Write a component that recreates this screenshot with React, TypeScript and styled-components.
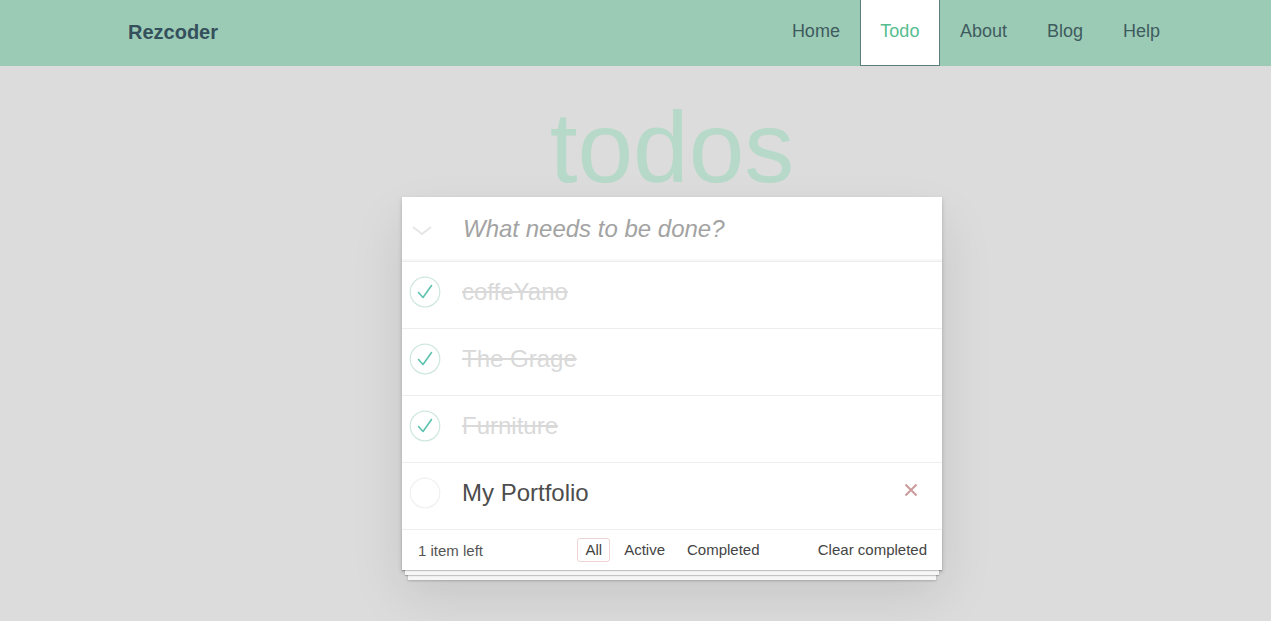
import React from "react";
import styled, { createGlobalStyle } from "styled-components";

const Global = createGlobalStyle`
  html, body { margin: 0; padding: 0; }
  body {
    background: #dcdcdc;
    font-family: "Liberation Sans", Arial, Helvetica, sans-serif;
    font-size: 14px;
    color: #4d4d4d;
    min-height: 621px;
  }
  * { box-sizing: border-box; }
`;

const NavBar = styled.header`
  height: 66px;
  background: #9ccbb5;
  display: flex;
  align-items: stretch;
  justify-content: space-between;
  padding: 0 91px 0 128px;
`;

const Brand = styled.div`
  display: flex;
  align-items: center;
  font-size: 20px;
  font-weight: 700;
  color: #34505c;
  padding-bottom: 2px;
`;

const NavList = styled.nav`
  display: flex;
  align-items: stretch;
`;

const NavLink = styled.a<{ $active?: boolean }>`
  display: flex;
  align-items: center;
  justify-content: center;
  padding: 0 19px 2px;
  min-width: ${(p) => (p.$active ? "80px" : "0")};
  font-size: 18px;
  text-decoration: none;
  color: ${(p) => (p.$active ? "#56bd8f" : "#3e5b5f")};
  background: ${(p) => (p.$active ? "#ffffff" : "transparent")};
  border: 1px solid ${(p) => (p.$active ? "#5b7d7e" : "transparent")};
  border-top: none;
`;

const Main = styled.main`
  display: flex;
  flex-direction: column;
  align-items: center;
  padding: 31px 0 40px 73px;
`;

const Title = styled.h1`
  margin: 0;
  height: 100px;
  font-size: 100px;
  line-height: 100px;
  font-weight: 400;
  color: #b6d9c9;
  text-align: center;
`;

const Card = styled.section`
  width: 540px;
  background: #fff;
  position: relative;
  box-shadow: 0 2px 4px 0 rgba(0, 0, 0, 0.2), 0 25px 50px 0 rgba(0, 0, 0, 0.1);
`;

const Header = styled.div`
  height: 65px;
  display: flex;
  align-items: center;
  border-bottom: 1px solid #ededed;
  box-shadow: inset 0 -2px 1px rgba(0, 0, 0, 0.03);
`;

const ToggleAll = styled.div`
  width: 60px;
  display: flex;
  align-items: center;
  padding-left: 9px;
  padding-top: 4px;
`;

const NewTodo = styled.input`
  flex: 1;
  border: none;
  outline: none;
  background: transparent;
  font-family: inherit;
  font-size: 24px;
  color: #4d4d4d;
  padding: 0 0 0 1px;
  &::placeholder {
    font-style: italic;
    color: #a3a3a3;
  }
`;

const List = styled.ul`
  list-style: none;
  margin: 0;
  padding: 0;
`;

const Item = styled.li`
  height: 67px;
  display: flex;
  align-items: center;
  border-bottom: 1px solid #ededed;
  padding: 0 22px 6px 0;
`;

const Check = styled.div`
  width: 60px;
  display: flex;
  align-items: center;
  padding-left: 7px;
`;

const Label = styled.span<{ $done?: boolean }>`
  flex: 1;
  font-size: 24px;
  line-height: 1.2;
  color: ${(p) => (p.$done ? "#d9d9d9" : "#4d4d4d")};
  text-decoration: ${(p) => (p.$done ? "line-through" : "none")};
`;

const Destroy = styled.button`
  border: none;
  background: none;
  padding: 0;
  width: 18px;
  height: 18px;
  display: flex;
  align-items: center;
  justify-content: center;
  margin-top: -6px;
`;

const Footer = styled.footer`
  height: 40px;
  display: grid;
  grid-template-columns: 1fr auto 1fr;
  align-items: center;
  padding: 0 15px 0 16px;
  color: #555;
  font-size: 15px;
  position: relative;
  &::before {
    content: "";
    position: absolute;
    right: 0;
    bottom: 0;
    left: 0;
    height: 40px;
    overflow: hidden;
    pointer-events: none;
    box-shadow: 0 1px 1px rgba(0, 0, 0, 0.2), 0 8px 0 -3px #f6f6f6,
      0 9px 1px -3px rgba(0, 0, 0, 0.2), 0 16px 0 -6px #f6f6f6,
      0 17px 2px -6px rgba(0, 0, 0, 0.2);
  }
`;

const Count = styled.span`
  justify-self: start;
  position: relative;
`;

const Filters = styled.ul`
  list-style: none;
  margin: 0;
  padding: 0;
  display: flex;
  position: relative;
`;

const Filter = styled.a<{ $selected?: boolean }>`
  display: block;
  margin: 3px;
  padding: 3px 7px;
  line-height: 16px;
  color: #444;
  text-decoration: none;
  border: 1px solid ${(p) => (p.$selected ? "rgba(175,47,47,0.2)" : "transparent")};
  border-radius: 3px;
`;

const Clear = styled.button`
  justify-self: end;
  border: none;
  background: none;
  padding: 0;
  margin-top: -2px;
  font-family: inherit;
  font-size: 15px;
  color: #444;
  position: relative;
`;

const Circle: React.FC<{ done: boolean }> = ({ done }) => (
  <svg width="32" height="32" viewBox="0 0 32 32">
    <circle cx="16" cy="16" r="14.8" fill="none" stroke={done ? "#cfe7e1" : "#f0f0f0"} strokeWidth="1.2" />
    {done && (
      <path d="M9.5 16.5 L14 21.5 L22.5 9.5" fill="none" stroke="#5dc2af" strokeWidth="1.6" strokeLinecap="round" strokeLinejoin="round" />
    )}
  </svg>
);

const todos = [
  { text: "coffeYano", done: true },
  { text: "The Grage", done: true },
  { text: "Furniture", done: true },
  { text: "My Portfolio", done: false },
];

export default function App() {
  return (
    <>
      <Global />
      <NavBar>
        <Brand>Rezcoder</Brand>
        <NavList>
          <NavLink href="#">Home</NavLink>
          <NavLink href="#" $active>Todo</NavLink>
          <NavLink href="#">About</NavLink>
          <NavLink href="#">Blog</NavLink>
          <NavLink href="#">Help</NavLink>
        </NavList>
      </NavBar>
      <Main>
        <Title>todos</Title>
        <Card>
          <Header>
            <ToggleAll>
              <svg width="22" height="12" viewBox="0 0 22 12">
                <path d="M2 2 L11 9 L20 2" fill="none" stroke="#e6e6e6" strokeWidth="2" />
              </svg>
            </ToggleAll>
            <NewTodo placeholder="What needs to be done?" />
          </Header>
          <List>
            {todos.map((t) => (
              <Item key={t.text}>
                <Check>
                  <Circle done={t.done} />
                </Check>
                <Label $done={t.done}>{t.text}</Label>
                {!t.done && (
                  <Destroy aria-label="delete">
                    <svg width="14" height="14" viewBox="0 0 14 14">
                      <path d="M1.5 1.5 L12.5 12.5 M12.5 1.5 L1.5 12.5" stroke="#cc9a9a" strokeWidth="2" />
                    </svg>
                  </Destroy>
                )}
              </Item>
            ))}
          </List>
          <Footer>
            <Count>1 item left</Count>
            <Filters>
              <li><Filter href="#" $selected>All</Filter></li>
              <li><Filter href="#">Active</Filter></li>
              <li><Filter href="#">Completed</Filter></li>
            </Filters>
            <Clear>Clear completed</Clear>
          </Footer>
        </Card>
      </Main>
    </>
  );
}
